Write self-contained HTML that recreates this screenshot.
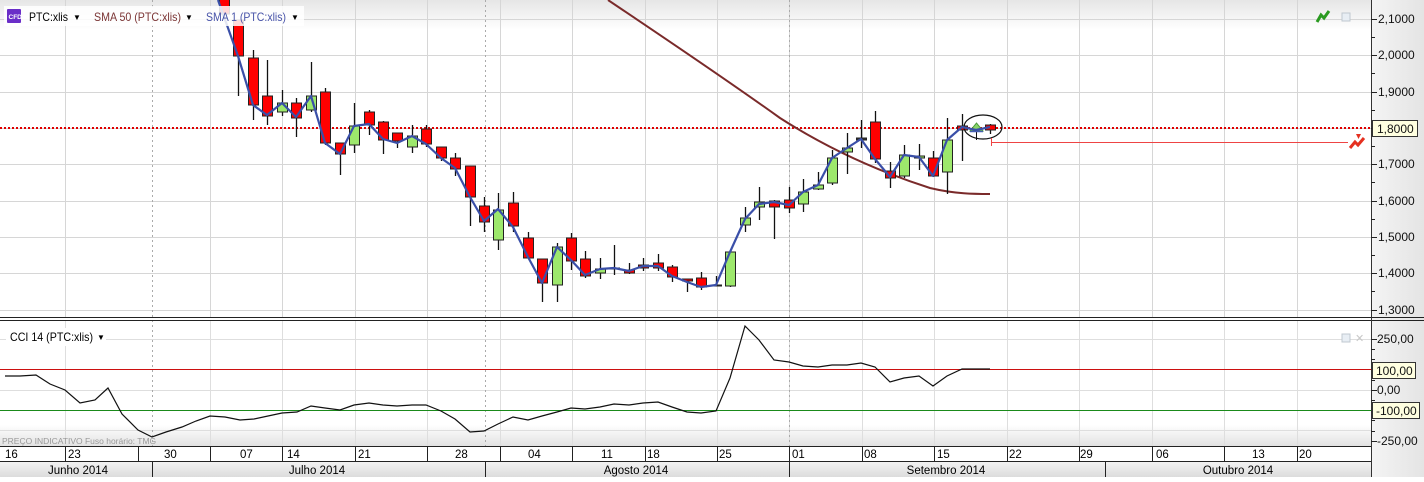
<!DOCTYPE html>
<html><head><meta charset="utf-8">
<style>
html,body{margin:0;padding:0;background:#fff;}
body{width:1424px;height:477px;overflow:hidden;font-family:"Liberation Sans",sans-serif;}
svg text{font-family:"Liberation Sans",sans-serif;}
</style></head><body>
<svg id="s" width="1424" height="477" viewBox="0 0 1424 477" xmlns="http://www.w3.org/2000/svg">
<defs>
<linearGradient id="tg" x1="0" y1="0" x2="0" y2="1"><stop offset="0" stop-color="#e6e6e6"/><stop offset="1" stop-color="#ffffff"/></linearGradient>
<linearGradient id="bg2" x1="0" y1="0" x2="0" y2="1"><stop offset="0" stop-color="#ffffff"/><stop offset="1" stop-color="#e2e2e2"/></linearGradient>
<linearGradient id="ax" x1="0" y1="0" x2="1" y2="0"><stop offset="0" stop-color="#f4f4f4"/><stop offset="1" stop-color="#e4e4e4"/></linearGradient>
<linearGradient id="mg" x1="0" y1="0" x2="0" y2="1"><stop offset="0" stop-color="#f2f2f2"/><stop offset="1" stop-color="#dcdcdc"/></linearGradient>
</defs>
<rect x="0" y="0" width="1371" height="30" fill="url(#tg)"/>
<rect x="0" y="425" width="1371" height="21" fill="url(#bg2)"/>
<rect x="1371" y="0" width="53" height="477" fill="url(#ax)"/>
<g id="grid"></g>
<g id="plot"></g>
<line x1="0" y1="317.5" x2="1424" y2="317.5" stroke="#222" stroke-width="1"/>
<line x1="0" y1="320.5" x2="1424" y2="320.5" stroke="#222" stroke-width="1"/>
<line x1="1371.5" y1="0" x2="1371.5" y2="477" stroke="#333"/>
<rect x="4" y="6" width="300" height="20" fill="#fff" opacity="0.85"/>
<rect x="7" y="9" width="14" height="14" fill="#6a2ec8" rx="1"/>
<text x="8.5" y="19" font-size="6.5" fill="#fff" font-weight="bold">CFD</text>
<text x="29" y="21" font-size="12" fill="#000" textLength="39" lengthAdjust="spacingAndGlyphs">PTC:xlis</text>
<text x="73" y="20" font-size="8" fill="#000">▼</text>
<text x="94" y="21" font-size="12" fill="#7a3434" textLength="87" lengthAdjust="spacingAndGlyphs">SMA 50 (PTC:xlis)</text>
<text x="185" y="20" font-size="8" fill="#000">▼</text>
<text x="206" y="21" font-size="12" fill="#4652a8" textLength="80" lengthAdjust="spacingAndGlyphs">SMA 1 (PTC:xlis)</text>
<text x="291" y="20" font-size="8" fill="#000">▼</text>
<rect x="6" y="328" width="100" height="18" fill="#fff"/>
<text x="10" y="341" font-size="12" fill="#000" textLength="83" lengthAdjust="spacingAndGlyphs">CCI 14 (PTC:xlis)</text>
<text x="97" y="340" font-size="8" fill="#000">▼</text>
<text x="2" y="444" font-size="8.5" fill="#999">PREÇO INDICATIVO   Fuso horário: TMG</text>
<path d="M1317 22 L1321 15 L1324 18 L1329 11" stroke="#2a9a20" stroke-width="3" fill="none"/>
<rect x="1342" y="13" width="8" height="8" fill="#e8eef4" stroke="#c0c8d0"/>
<rect x="1342" y="334" width="8" height="8" fill="#e8eef4" stroke="#c0c8d0"/>
<text x="1355" y="342" font-size="11" fill="#c8c8c8">✕</text>
<path d="M1350 148 L1355 142 L1358 145 L1364 138" stroke="#e53020" stroke-width="3" fill="none"/>
<path d="M1356 134 L1361 134 L1358.5 139 Z" fill="#e53020"/>
<rect x="0" y="446" width="1371" height="16" fill="#fff"/>
<line x1="0" y1="446.5" x2="1371" y2="446.5" stroke="#222"/>
<line x1="0" y1="461.5" x2="1371" y2="461.5" stroke="#222"/>
<rect x="0" y="462" width="1371" height="15" fill="url(#mg)"/>
<g id="dates" font-size="11.5" fill="#000"></g>
</svg>
<script>
const NS="http://www.w3.org/2000/svg";
function el(p,t,a,txt){const e=document.createElementNS(NS,t);for(const k in a)e.setAttribute(k,a[k]);if(txt!=null)e.textContent=txt;p.appendChild(e);return e;}
const g=document.getElementById('grid'),pl=document.getElementById('plot'),d=document.getElementById('dates'),s=document.getElementById('s');
const seps=[65,138,210,282,355,427,500,572,645,717,789,862,934,1007,1079,1152,1224,1297];
[19,55,92,128,164,201,237,273,310].forEach(y=>el(g,'line',{x1:0,x2:1371,y1:y+.5,y2:y+.5,stroke:'#d6d6d6'}));
[339,390,430].forEach(y=>el(g,'line',{x1:0,x2:1371,y1:y+.5,y2:y+.5,stroke:'#dedede'}));
seps.forEach(x=>{if(x==138)return;el(g,'line',{x1:x+.5,x2:x+.5,y1:0,y2:317,stroke:'#d6d6d6'});el(g,'line',{x1:x+.5,x2:x+.5,y1:321,y2:446,stroke:'#dedede'});});
[152,485,789].forEach(x=>{el(g,'line',{x1:x+.5,x2:x+.5,y1:0,y2:446,stroke:'#aaa','stroke-dasharray':'2,3'});});
el(pl,'line',{x1:0,x2:1371,y1:369.5,y2:369.5,stroke:'#cc1010'});
el(pl,'line',{x1:0,x2:1371,y1:410.5,y2:410.5,stroke:'#1a8a1a'});
el(pl,'line',{x1:0,x2:1371,y1:128,y2:128,stroke:'#e00000','stroke-width':2,'stroke-dasharray':'2,2'});
el(pl,'path',{d:'M608 0 C660 35 720 75 780 118 C830 150 880 172 930 188 C955 194 975 194 990 194',stroke:'#7a2a2a','stroke-width':2,fill:'none'});
const C=[[224,-2,14,-2,14,'r'],[238,20,56,20,96,'r'],[253,58,105,50,120,'r'],[267,96,116,60,125,'r'],[282,103,112,90,116,'g'],[296,103,118,98,137,'r'],[311,96,110,62,112,'g'],[325,92,143,88,145,'r'],[340,143,154,143,175,'r'],[354,126,145,103,153,'g'],[369,112,125,110,135,'r'],[383,122,140,121,154,'r'],[397,133,141,133,148,'r'],[412,136,147,125,153,'g'],[426,129,144,125,147,'r'],[441,147,158,147,161,'r'],[455,158,169,153,176,'r'],[470,166,197,166,226,'r'],[484,206,222,197,232,'r'],[498,210,240,193,250,'g'],[513,203,226,192,232,'r'],[528,238,258,232,258,'r'],[542,259,283,259,302,'r'],[557,247,285,243,302,'g'],[571,238,261,233,270,'r'],[585,259,276,251,278,'r'],[600,269,273,258,279,'g'],[614,268,269,245,275,'n'],[629,270,273,263,274,'r'],[643,265,268,258,271,'r'],[658,263,268,254,271,'r'],[672,267,277,265,282,'r'],[687,279,281,279,292,'r'],[701,278,287,272,290,'r'],[716,285,286,276,286,'n'],[730,252,286,252,287,'g'],[745,218,225,207,232,'g'],[759,202,207,187,220,'g'],[774,201,207,200,239,'r'],[789,200,208,187,213,'r'],[803,192,204,179,212,'g'],[818,185,189,172,190,'g'],[832,158,183,150,185,'g'],[847,148,152,133,174,'g'],[861,138,140,120,148,'n'],[875,122,159,111,163,'r'],[890,171,178,162,188,'r'],[904,155,176,145,178,'g'],[919,156,158,144,170,'g'],[933,158,176,151,177,'r'],[947,140,172,118,194,'g'],[962,126,130,114,161,'r'],[990,125,130,124,134,'r']];
C.forEach(c=>{const[x,t,b,h,l,k]=c;el(pl,'line',{x1:x+.5,x2:x+.5,y1:h,y2:l,stroke:'#111','stroke-width':1.3});
const f=k=='r'?'#ff0000':k=='g'?'#9de86c':'#333';el(pl,'rect',{x:x-4.5,y:t,width:10,height:Math.max(b-t,1),fill:f,stroke:'#222','stroke-width':1});});
el(pl,'line',{x1:976.5,x2:976.5,y1:127,y2:140,stroke:'#111'});
el(pl,'path',{d:'M970 131 L976.5 123 L983 131 Z',fill:'#8ad46a',stroke:'#4a9a3a'});
el(pl,'line',{x1:970,x2:983,y1:131.5,y2:131.5,stroke:'#4660b0','stroke-width':1.5});
el(pl,'ellipse',{cx:983,cy:127,rx:19,ry:12,fill:'none',stroke:'#111','stroke-width':1.2});
el(pl,'line',{x1:991,x2:1348,y1:142.5,y2:142.5,stroke:'#ee4444'});
el(pl,'line',{x1:991.5,x2:991.5,y1:138,y2:146,stroke:'#ee4444'});
const B=[[218,0],[238,56],[253,105],[267,115],[282,103],[296,117],[311,96],[325,143],[340,154],[354,126],[369,124],[383,139],[397,143],[412,136],[426,144],[441,158],[455,168],[470,197],[484,221],[498,209],[513,227],[528,257],[542,283],[557,247],[571,260],[585,275],[600,269],[614,268],[629,271],[643,266],[658,266],[672,276],[687,282],[701,287],[716,285],[730,252],[745,219],[759,204],[774,202],[789,205],[803,192],[818,185],[832,158],[847,148],[861,139],[875,159],[890,177],[904,155],[919,157],[933,176],[947,140],[962,127],[976,130],[990,127]];
el(pl,'polyline',{points:B.map(p=>p.join(',')).join(' '),stroke:'#3a4fa8','stroke-width':2.2,fill:'none','stroke-linejoin':'round'});
const Q=[[5,376],[20,376],[36,375],[50,384],[65,390],[80,403],[95,400],[108,388],[122,414],[138,430],[152,437],[166,432],[182,427],[196,421],[210,416],[225,417],[240,420],[254,419],[268,416],[282,413],[297,412],[311,406],[325,408],[340,410],[354,405],[369,403],[383,405],[397,406],[412,405],[426,405],[441,411],[455,419],[470,432],[484,431],[498,424],[513,417],[528,420],[542,416],[557,412],[571,408],[585,409],[600,407],[614,404],[629,405],[643,403],[658,402],[672,407],[687,412],[701,413],[716,411],[730,378],[745,326],[759,340],[774,360],[789,362],[803,366],[818,367],[832,365],[847,365],[861,363],[875,367],[890,382],[904,378],[919,376],[933,386],[947,376],[962,369],[976,369],[990,369]];
el(pl,'polyline',{points:Q.map(p=>p.join(',')).join(' '),stroke:'#111','stroke-width':1.2,fill:'none'});
const L=['2,1000','2,0000','1,9000','1,8000','1,7000','1,6000','1,5000','1,4000','1,3000'];
[19,55,92,128,164,201,237,273,310].forEach((y,i)=>{el(s,'line',{x1:1371,x2:1377,y1:y+.5,y2:y+.5,stroke:'#222'});if(i<8)el(s,'line',{x1:1371,x2:1375,y1:y+18.5,y2:y+18.5,stroke:'#222'});
if(i!=3)el(s,'text',{x:1378,y:y+4,'font-size':12,fill:'#111'},L[i]);});
el(s,'rect',{x:1372.5,y:120.5,width:45,height:16,fill:'#ffffe0',stroke:'#333'});
el(s,'text',{x:1377,y:133,'font-size':12,fill:'#111'},'1,8000');
[[339,'250,00'],[390,'0,00'],[441,'-250,00']].forEach(a=>{el(s,'line',{x1:1371,x2:1377,y1:a[0]+.5,y2:a[0]+.5,stroke:'#222'});el(s,'text',{x:1377,y:a[0]+4,'font-size':12,fill:'#111'},a[1]);});
[349,359,380,400,420,431].forEach(y=>el(s,'line',{x1:1371,x2:1375,y1:y+.5,y2:y+.5,stroke:'#222'}));
el(s,'rect',{x:1372.5,y:362.5,width:43,height:16,fill:'#ffffe0',stroke:'#333'});
el(s,'text',{x:1376,y:375,'font-size':12,fill:'#111'},'100,00');
el(s,'rect',{x:1372.5,y:402.5,width:47,height:16,fill:'#ffffe0',stroke:'#333'});
el(s,'text',{x:1376,y:415,'font-size':12,fill:'#111'},'-100,00');
seps.forEach(x=>el(d,'line',{x1:x+.5,x2:x+.5,y1:446,y2:462,stroke:'#222'}));
[[5,'16'],[68,'23'],[164,'30'],[240,'07'],[287,'14'],[358,'21'],[455,'28'],[528,'04'],[601,'11'],[647,'18'],[719,'25'],[792,'01'],[864,'08'],[937,'15'],[1009,'22'],[1080,'29'],[1156,'06'],[1252,'13'],[1299,'20']].forEach(a=>el(d,'text',{x:a[0],y:458},a[1]));
[152,485,789,1105].forEach(x=>el(d,'line',{x1:x+.5,x2:x+.5,y1:462,y2:477,stroke:'#222'}));
[[78,'Junho 2014'],[317,'Julho 2014'],[636,'Agosto 2014'],[946,'Setembro 2014'],[1238,'Outubro 2014']].forEach(a=>el(d,'text',{x:a[0],y:474,'text-anchor':'middle'},a[1]));
</script>
</body></html>
